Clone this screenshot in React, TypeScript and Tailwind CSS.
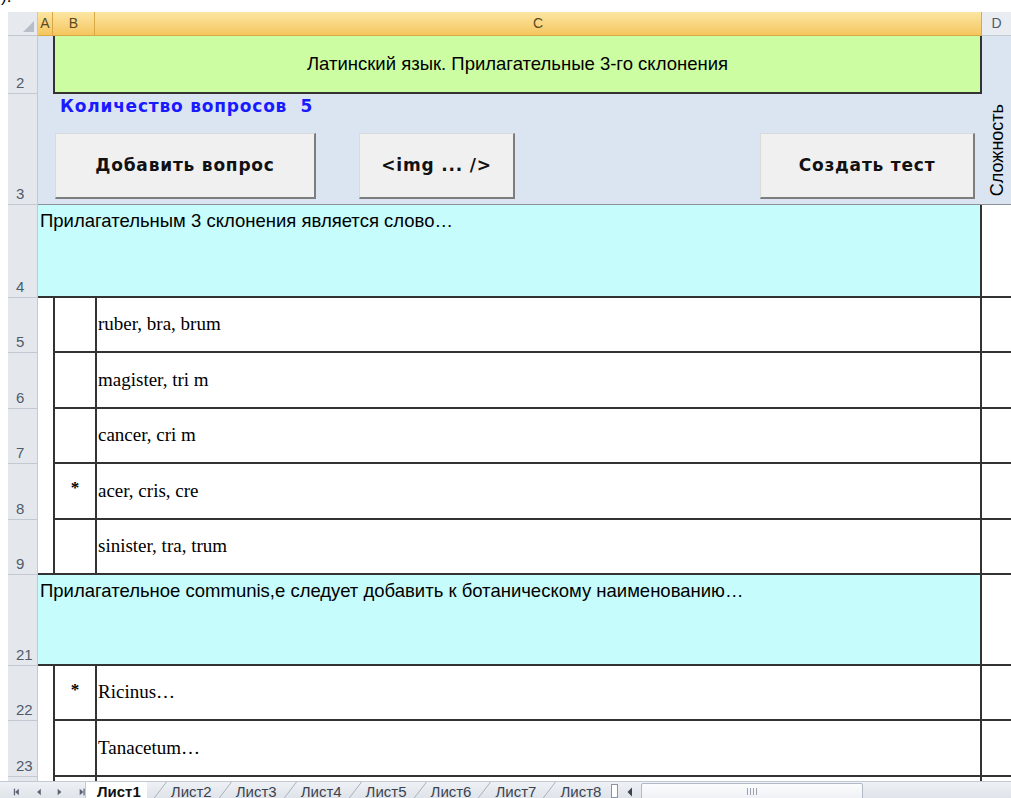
import React from 'react'

type Answer = { text: string; correct?: boolean }

type Question = {
  row: number
  h: string
  text: string
  answers: { row: number; a: Answer }[]
}

const questions: Question[] = [
  {
    row: 4,
    h: 'h-[93px]',
    text: 'Прилагательным 3 склонения является слово…',
    answers: [
      { row: 5, a: { text: 'ruber, bra, brum' } },
      { row: 6, a: { text: 'magister, tri m' } },
      { row: 7, a: { text: 'cancer, cri m' } },
      { row: 8, a: { text: 'acer, cris, cre', correct: true } },
      { row: 9, a: { text: 'sinister, tra, trum' } },
    ],
  },
  {
    row: 21,
    h: 'h-[91px]',
    text: 'Прилагательное communis,е следует добавить к ботаническому наименованию…',
    answers: [
      { row: 22, a: { text: 'Ricinus…', correct: true } },
      { row: 23, a: { text: 'Tanacetum…' } },
    ],
  },
]

const ANSWER_HEIGHTS = ['h-[55px]', 'h-[56px]', 'h-[55px]', 'h-[56px]', 'h-[55px]']

function RowHead({ n }: { n?: number }) {
  return (
    <div className="w-[30px] shrink-0 bg-[#e4e7ec] border-b border-r border-[#c3c9d2] flex items-end pl-[8px] pb-[1px] text-[15px] leading-[18px] text-[#4f5b6b]">
      {n}
    </div>
  )
}

function ColumnHeaders() {
  const gold =
    'bg-linear-to-b from-[#fce6a2] to-[#f5c65d] border-r border-b border-[#d9a847] flex items-center justify-center text-[14px] text-[#5a4a20]'
  return (
    <div className="flex h-[24px] pl-[8px]">
      <div className="w-[30px] bg-[#e6e9ee] border-r border-b border-[#c3c9d2] relative">
        <svg className="absolute right-[3px] bottom-[3px]" width="11" height="11" viewBox="0 0 11 11">
          <path d="M11 0 L11 11 L0 11 Z" fill="#b7bec8" />
        </svg>
      </div>
      <div className={`w-[15px] ${gold}`}>A</div>
      <div className={`w-[42px] ${gold}`}>B</div>
      <div className={`w-[887px] ${gold}`}>C</div>
      <div className="w-[29px] bg-[#e9ecf0] border-b border-[#c3c9d2] flex items-center justify-center text-[14px] text-[#4f5b6b]">
        D
      </div>
    </div>
  )
}

function SheetButton({ label, w }: { label: string; w: string }) {
  return (
    <div
      className={`${w} h-[66px] bg-[#f0f0f0] border-t border-l border-[#dadada] border-b-2 border-r-2 border-b-[#7d7d7d] border-r-[#7d7d7d] flex items-center justify-center font-['DejaVu_Sans',sans-serif] font-bold text-[17px] tracking-[0.8px] text-[#111]`}
    >
      {label}
    </div>
  )
}

function HeaderRows() {
  return (
    <>
      <div className="flex h-[58px] pl-[8px]">
        <RowHead n={2} />
        <div className="w-[15px] bg-[#dbe5f1]" />
        <div className="w-[929px] bg-[#ccfda3] border-l-2 border-r-2 border-b-2 border-[#333] flex items-center justify-center text-[18.5px]">
          Латинский язык. Прилагательные 3-го склонения
        </div>
        <div className="w-[29px] bg-[#dbe5f1]" />
      </div>
      <div className="flex h-[111px] pl-[8px]">
        <RowHead n={3} />
        <div className="w-[944px] bg-[#dbe5f1] border-b border-[#8c9097] flex flex-col">
          <div className="pl-[22px] pt-[1px] font-['DejaVu_Sans',sans-serif] font-bold text-[17px] tracking-[0.8px] leading-[22px] text-[#1a1aff] whitespace-pre">
            Количество вопросов  5
          </div>
          <div className="flex pl-[17px] mt-[16px]">
            <SheetButton label="Добавить вопрос" w="w-[261px]" />
            <div className="w-[43px]" />
            <SheetButton label="<img ... />" w="w-[156px]" />
            <div className="w-[245px]" />
            <SheetButton label="Создать тест" w="w-[215px]" />
          </div>
        </div>
        <div className="w-[29px] bg-[#dbe5f1] border-b border-[#8c9097] flex items-end justify-center pb-[8px]">
          <span className="[writing-mode:vertical-rl] rotate-180 text-[18px] leading-[20px]">Сложность</span>
        </div>
      </div>
    </>
  )
}

function QuestionRow({ q }: { q: Question }) {
  return (
    <div className={`flex ${q.h} pl-[8px]`}>
      <RowHead n={q.row} />
      <div className="w-[944px] bg-[#c7fcfc] border-r-2 border-b-2 border-[#333] pl-[2px] pt-[6px] text-[18.5px] leading-[20px]">
        {q.text}
      </div>
      <div className="w-[29px] border-b-2 border-[#333]" />
    </div>
  )
}

function AnswerRow({ n, a, h, last }: { n: number; a: Answer; h: string; last: boolean }) {
  return (
    <div className={`flex ${h} pl-[8px]`}>
      <RowHead n={n} />
      <div className={`w-[15px] ${last ? 'border-b-2 border-[#333]' : ''}`} />
      <div className="w-[42px] border-l-2 border-b-2 border-[#333] flex items-center justify-center pb-[6px] font-['Liberation_Serif',serif] font-bold text-[17px]">
        {a.correct ? '*' : ''}
      </div>
      <div className="w-[887px] border-l-2 border-r-2 border-b-2 border-[#333] flex items-center pl-[1px] font-['Liberation_Serif',serif] text-[19px]">
        {a.text}
      </div>
      <div className="w-[29px] border-b-2 border-[#333]" />
    </div>
  )
}

function NavArrow({ dir, bar }: { dir: 'l' | 'r'; bar?: boolean }) {
  return (
    <svg width="9" height="10" viewBox="0 0 9 10">
      {dir === 'l' ? (
        <>
          <path d="M7 1 L7 9 L2.5 5 Z" fill="#5b6474" />
          {bar && <rect x="1" y="1" width="1.5" height="8" fill="#5b6474" />}
        </>
      ) : (
        <>
          <path d="M2 1 L2 9 L6.5 5 Z" fill="#5b6474" />
          {bar && <rect x="6.5" y="1" width="1.5" height="8" fill="#5b6474" />}
        </>
      )}
    </svg>
  )
}

// slanted divider between sheet tabs
function TabSep() {
  return (
    <svg width="14" height="17" viewBox="0 0 14 17" className="shrink-0">
      <path d="M0.5 17 L13.5 0" stroke="#a9b1bd" strokeWidth="1" />
    </svg>
  )
}

function TabBar() {
  const tabs = ['Лист2', 'Лист3', 'Лист4', 'Лист5', 'Лист6', 'Лист7', 'Лист8']
  return (
    <div className="flex h-[17px] bg-linear-to-b from-[#eef1f5] to-[#dfe4ea] border-t border-[#c3c9d2] text-[15px] leading-[17px] text-[#3c4350]">
      <div className="flex items-start pt-[5px] pl-[13px] w-[86px] h-[17px] gap-[14px] border-r border-[#c3c9d2]">
        <NavArrow dir="l" bar />
        <NavArrow dir="l" />
        <NavArrow dir="r" />
        <NavArrow dir="r" bar />
      </div>
      <div className="bg-white pl-[11px] pr-[6px] pt-[1px] font-bold text-[#111] h-[17px]">Лист1</div>
      {tabs.map((t) => (
        <div key={t} className="flex items-start h-[17px]">
          <div className="ml-[6px]">
            <TabSep />
          </div>
          <span className="pl-[4px] pt-[1px]">{t}</span>
        </div>
      ))}
      <div className="flex items-start pt-[2px] ml-[10px] gap-[9px] h-[17px]">
        <span className="w-[7px] h-[14px] border border-[#8d95a2] bg-white" />
        <svg width="6" height="10" viewBox="0 0 6 10" className="mt-[3px]">
          <path d="M5 0.5 L5 9.5 L0.5 5 Z" fill="#3c4350" />
        </svg>
      </div>
      <div className="ml-[8px] w-[222px] h-[17px] mt-[1px] rounded-[2px] border border-[#b3bac5] bg-linear-to-b from-[#fbfcfd] to-[#eef1f5] flex items-center justify-center gap-[2px]">
        <span className="w-px h-[7px] bg-[#9aa3b0]" />
        <span className="w-px h-[7px] bg-[#9aa3b0]" />
        <span className="w-px h-[7px] bg-[#9aa3b0]" />
        <span className="w-px h-[7px] bg-[#9aa3b0]" />
      </div>
      <div className="flex-1" />
    </div>
  )
}

export default function App() {
  return (
    <div className="w-[1011px] h-[798px] overflow-hidden bg-white text-black font-['Liberation_Sans',Arial,sans-serif]">
      <div className="h-[12px] overflow-hidden">
        <div className="-mt-[12px] text-[17px] leading-[17px] pl-[1px]">).</div>
      </div>
      <ColumnHeaders />
      <HeaderRows />
      {questions.map((q) => (
        <React.Fragment key={q.row}>
          <QuestionRow q={q} />
          {q.answers.map((x, i) => (
            <AnswerRow
              key={x.row}
              n={x.row}
              a={x.a}
              h={ANSWER_HEIGHTS[i]}
              last={i === q.answers.length - 1 && q.row === 4}
            />
          ))}
        </React.Fragment>
      ))}
      <div className="flex h-[4px] pl-[8px]">
        <div className="w-[30px] bg-[#e4e7ec] border-r border-[#c3c9d2]" />
        <div className="w-[15px]" />
        <div className="w-[42px] border-l-2 border-[#333]" />
        <div className="w-[887px] border-l-2 border-r-2 border-[#333]" />
      </div>
      <TabBar />
    </div>
  )
}
